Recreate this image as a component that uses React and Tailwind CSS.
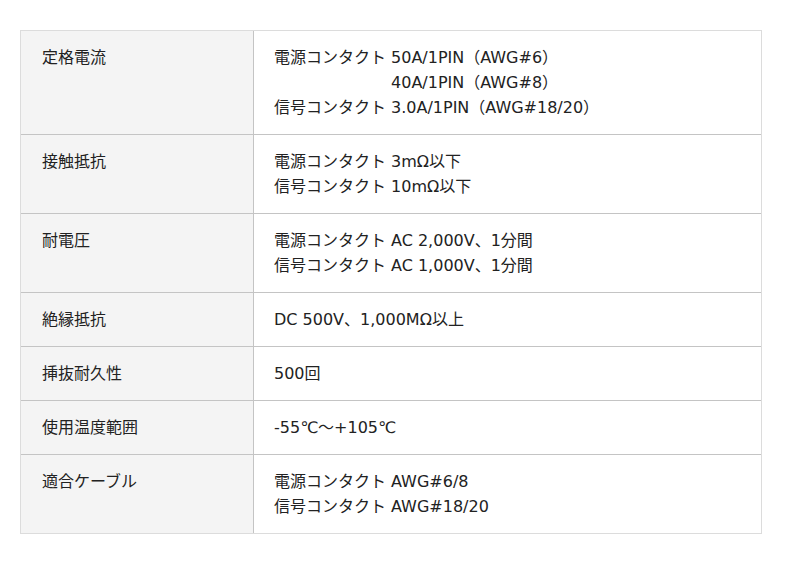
const rows = [
  {
    label: '定格電流',
    lines: [
      ['電源コンタクト', '50A/1PIN（AWG#6）'],
      ['', '40A/1PIN（AWG#8）'],
      ['信号コンタクト', '3.0A/1PIN（AWG#18/20）'],
    ],
  },
  {
    label: '接触抵抗',
    lines: [
      ['電源コンタクト', '3mΩ以下'],
      ['信号コンタクト', '10mΩ以下'],
    ],
  },
  {
    label: '耐電圧',
    lines: [
      ['電源コンタクト', 'AC 2,000V、1分間'],
      ['信号コンタクト', 'AC 1,000V、1分間'],
    ],
  },
  { label: '絶縁抵抗', text: 'DC 500V、1,000MΩ以上' },
  { label: '挿抜耐久性', text: '500回' },
  { label: '使用温度範囲', text: '-55℃〜+105℃' },
  {
    label: '適合ケーブル',
    lines: [
      ['電源コンタクト', 'AWG#6/8'],
      ['信号コンタクト', 'AWG#18/20'],
    ],
  },
];

export default function App() {
  return (
    <div
      className="w-[800px] h-[564px] bg-white pt-[30px] px-[20px] text-[16px] leading-[25px] text-[#222]"
      style={{ fontFamily: '"DejaVu Sans", "Noto Sans CJK JP", sans-serif' }}
    >
      <div className="w-[742px] border border-[#dcdcdc]">
        {rows.map((r, i) => (
          <div
            key={r.label}
            className={`flex ${i < rows.length - 1 ? 'border-b border-[#c4c4c4]' : ''}`}
          >
            <div className="w-[233px] shrink-0 bg-[#f4f4f4] border-r border-[#c4c4c4] pl-[21px] py-[14px]">
              {r.label}
            </div>
            <div className="flex-1 pl-[20px] py-[14px]">
              {r.text ? (
                r.text
              ) : (
                <div className="grid grid-cols-[auto_1fr] gap-x-[5px]">
                  {r.lines.map(([a, b], j) => (
                    <div key={j} className="contents">
                      <span>{a}</span>
                      <span>{b}</span>
                    </div>
                  ))}
                </div>
              )}
            </div>
          </div>
        ))}
      </div>
    </div>
  );
}
